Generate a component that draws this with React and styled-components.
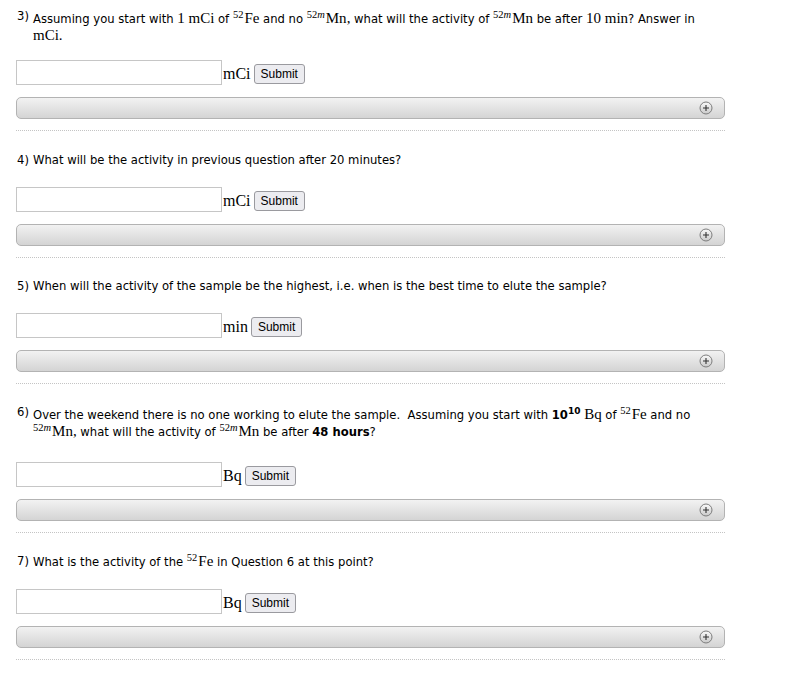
import React from "react";
import styled, { createGlobalStyle } from "styled-components";

const Global = createGlobalStyle`
  html, body { margin: 0; padding: 0; background: #fff; }
  body { font-family: "DejaVu Sans", Verdana, sans-serif; color: #000; }
`;

const Page = styled.div`
  width: 709px;
  padding: 10px 0 0 16px;
`;

const Question = styled.section`
  padding-top: ${(p) => p.$top}px;
  padding-bottom: 11px;
  border-bottom: 1px dotted #c4c4c4;
`;

const Prompt = styled.div`
  display: flex;
  font-size: 11.6px;
  line-height: 16px;
  padding-left: 1px;
`;

const Num = styled.span`
  flex: none;
  width: 16px;
  position: relative;
  top: ${(p) => (p.$raised ? "-2px" : "0")};
`;

const Body = styled.div`
  flex: 1;
`;

const M = styled.span`
  font-family: "Liberation Serif", "Times New Roman", serif;
  font-size: 15px;
`;

const Sup = styled.sup`
  font-family: "Liberation Serif", "Times New Roman", serif;
  font-size: 10.5px;
  line-height: 0;
  vertical-align: 5px;
  margin-right: 1px;
`;

const I = styled.i`
  font-style: italic;
`;

const B = styled.b`
  font-weight: bold;
`;

const BSup = styled.sup`
  font-size: 9px;
  font-weight: bold;
  line-height: 0;
  vertical-align: 5px;
`;

const AnswerRow = styled.div`
  display: flex;
  align-items: flex-end;
  margin-top: ${(p) => p.$gap}px;
`;

const Field = styled.input`
  width: 206px;
  height: 25px;
  box-sizing: border-box;
  border: 1px solid #c6c6c6;
  margin: 0;
  padding: 2px 4px;
  font-size: 13px;
  background: #fff;
`;

const Unit = styled.span`
  font-family: "Liberation Serif", "Times New Roman", serif;
  font-size: 16px;
  margin: 0 3px 3px 1px;
  line-height: 16px;
`;

const SubmitBtn = styled.button`
  font-family: "Liberation Sans", Arial, sans-serif;
  font-size: 12px;
  height: 20px;
  padding: 0 6px;
  margin: 0 0 1px 0;
  border: 1px solid #9a9a9f;
  border-radius: 3px;
  background: #ececf0;
  color: #000;
  line-height: 18px;
`;

const Bar = styled.div`
  margin-top: 12px;
  height: 22px;
  box-sizing: border-box;
  border: 1px solid #b3b3b3;
  border-radius: 5px;
  background: linear-gradient(#f2f2f2, #d4d4d4);
  display: flex;
  align-items: center;
  justify-content: flex-end;
  padding-right: 11px;
`;

const PlusIcon = () => (
  <svg width="14" height="14" viewBox="0 0 14 14">
    <defs>
      <linearGradient id="pg" x1="0" y1="0" x2="0" y2="1">
        <stop offset="0" stopColor="#fafafa" />
        <stop offset="1" stopColor="#c9c9c9" />
      </linearGradient>
    </defs>
    <circle cx="7" cy="7" r="6" fill="url(#pg)" stroke="#7d7d7d" strokeWidth="1" />
    <path d="M4 7h6M7 4v6" stroke="#333" strokeWidth="1.1" />
  </svg>
);

const Fe = () => (
  <>
    <Sup>52</Sup>
    <M>Fe</M>
  </>
);

const Mn = () => (
  <>
    <Sup>
      52<I>m</I>
    </Sup>
    <M>Mn</M>
  </>
);

const Item = ({ top, num, raised, children, unit, gap = 19 }) => (
  <Question $top={top}>
    <Prompt>
      <Num $raised={raised}>{num})</Num>
      <Body>{children}</Body>
    </Prompt>
    <AnswerRow $gap={gap}>
      <Field type="text" />
      <Unit>{unit}</Unit>
      <SubmitBtn type="button">Submit</SubmitBtn>
    </AnswerRow>
    <Bar>
      <PlusIcon />
    </Bar>
  </Question>
);

export default function App() {
  return (
    <>
      <Global />
      <Page>
        <Item top={0} num={3} raised unit="mCi" gap={16}>
          Assuming you start with <M>1 mCi</M> of <Fe /> and no <Mn />
          <M>,</M> what will the activity of <Mn /> be after <M>10 min</M>? Answer in{" "}
          <M>mCi.</M>
        </Item>
        <Item top={21} num={4} unit="mCi">
          What will be the activity in previous question after 20 minutes?
        </Item>
        <Item top={20} num={5} unit="min">
          When will the activity of the sample be the highest, i.e. when is the best time to
          elute the sample?
        </Item>
        <Item top={22} num={6} raised unit="Bq" gap={22}>
          Over the weekend there is no one working to elute the sample.&nbsp; Assuming you
          start with{" "}
          <B>
            10<BSup>10</BSup>
          </B>{" "}
          <M>Bq</M> of <Fe /> and no <Mn />
          <M>,</M> what will the activity of <Mn /> be after <B>48 hours</B>?
        </Item>
        <Item top={20} num={7} unit="Bq">
          What is the activity of the <Fe /> in Question 6 at this point?
        </Item>
      </Page>
    </>
  );
}
